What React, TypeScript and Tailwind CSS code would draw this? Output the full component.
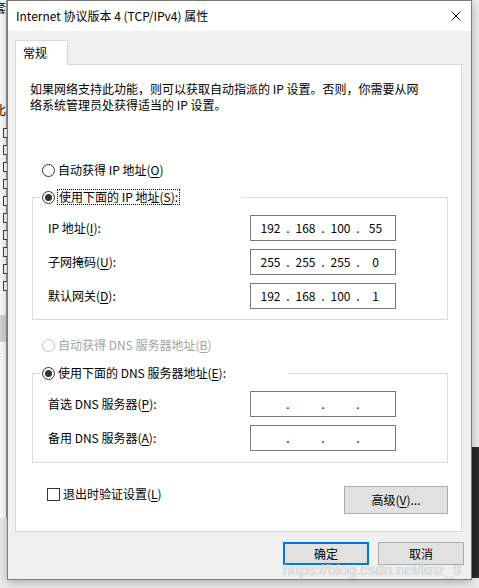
import { Fragment } from "react";
import type { ReactNode } from "react";

const Radio = ({ checked, disabled }: { checked?: boolean; disabled?: boolean }) => (
  <span
    className={`flex h-[13px] w-[13px] shrink-0 items-center justify-center rounded-full border bg-white ${
      disabled ? "border-[#c2c2c2]" : "border-[#333333]"
    }`}
  >
    {checked && <span className="h-[7px] w-[7px] rounded-full bg-[#333333]" />}
  </span>
);

const Key = ({ k }: { k: string }) => <u className="underline-offset-[2px]">{k}</u>;

const IpBox = ({ parts }: { parts: string[] }) => (
  <div className="grid h-[26px] w-[146px] grid-cols-[29px_6px_29px_6px_29px_6px_29px] items-center border border-[#7a7a7a] bg-white pl-[5px] leading-none">
    {parts.map((p, i) => (
      <Fragment key={i}>
        {i > 0 && <span className="text-center">.</span>}
        <span className="text-center">{p}</span>
      </Fragment>
    ))}
  </div>
);

const Field = ({ label, parts }: { label: ReactNode; parts: string[] }) => (
  <div className="ml-[8px] flex items-center">
    <span className="w-[202px]">{label}</span>
    <IpBox parts={parts} />
  </div>
);

export default function App() {
  return (
    <div className="relative h-[588px] w-[479px] overflow-hidden bg-[#ededed] font-['Noto_Sans_CJK_SC',sans-serif] text-[12px] text-black">
      {/* window behind, left edge */}
      <div className="absolute left-0 top-0 flex h-[518px] w-[7px] flex-col border-r border-[#9a9a9a] bg-white">
        <span className="-ml-[6px] leading-[16px]">套</span>
        <span className="-ml-[6px] mt-[86px] leading-[16px]">比</span>
        <div className="mt-[10px] flex flex-col gap-[7px]">
          {Array.from({ length: 10 }).map((_, i) => (
            <span key={i} className="ml-[3px] h-[10px] w-[4px] border border-r-0 border-[#444444] bg-white" />
          ))}
        </div>
        <div className="mt-[24px] h-[27px] bg-[#d6d6d6]" />
        <span className="-ml-[6px] mt-[6px] leading-[16px]">扌</span>
      </div>
      {/* window behind, right edge */}
      <div className="absolute right-0 top-0 h-[447px] w-[7px] bg-[#efefef]" />
      <div className="absolute right-0 top-[447px] h-[131px] w-[7px] bg-[#2b2b2b]" />

      {/* dialog */}
      <div className="absolute left-[7px] top-0 flex h-[580px] w-[465px] flex-col border border-[#7a7a7a] bg-[#f0f0f0] shadow-[0_2px_10px_rgba(0,0,0,0.3)]">
        <div className="flex h-[30px] shrink-0 items-center justify-between bg-white pl-[8px] pr-[10px]">
          <span>Internet 协议版本 4 (TCP/IPv4) 属性</span>
          <svg width="10" height="10" viewBox="0 0 10 10" className="shrink-0">
            <path d="M0.5 0.5 L9.5 9.5 M9.5 0.5 L0.5 9.5" stroke="#111" strokeWidth="1" fill="none" />
          </svg>
        </div>

        <div className="relative z-10 -mb-px ml-[7px] mt-[9px] flex h-[25px] w-[53px] items-center border border-b-0 border-[#d9d9d9] bg-white pl-[7px]">
          常规
        </div>

        <div className="ml-[7px] flex h-[468px] w-[447px] shrink-0 flex-col border border-[#d9d9d9] bg-white">
          <p className="ml-[14px] mt-[16px] leading-[16px]">
            如果网络支持此功能，则可以获取自动指派的 IP 设置。否则，你需要从网
            <br />
            络系统管理员处获得适当的 IP 设置。
          </p>

          <div className="ml-[26px] mt-[49px] flex h-[16px] items-center gap-[3px]">
            <Radio />
            <span>
              自动获得 IP 地址(<Key k="O" />)
            </span>
          </div>

          <fieldset className="ml-[16px] mt-[11px] w-[416px] border border-[#dcdcdc] px-[7px] pb-[10px]">
            <legend className="w-[202px] bg-white p-0">
              <div className="flex h-[16px] items-center gap-[2px] pl-[2px]">
                <Radio checked />
                <span className="flex h-[16px] items-center border border-dotted border-black px-[1px]">
                  使用下面的 IP 地址(<Key k="S" />):
                </span>
              </div>
            </legend>
            <div className="mt-[10px] flex flex-col gap-[8px]">
              <Field
                label={
                  <>
                    IP 地址(<Key k="I" />):
                  </>
                }
                parts={["192", "168", "100", "55"]}
              />
              <Field
                label={
                  <>
                    子网掩码(<Key k="U" />):
                  </>
                }
                parts={["255", "255", "255", "0"]}
              />
              <Field
                label={
                  <>
                    默认网关(<Key k="D" />):
                  </>
                }
                parts={["192", "168", "100", "1"]}
              />
            </div>
          </fieldset>

          <div className="ml-[26px] mt-[17px] flex h-[16px] items-center gap-[3px] text-[#a3a3a3]">
            <Radio disabled />
            <span>
              自动获得 DNS 服务器地址(<Key k="B" />)
            </span>
          </div>

          <fieldset className="ml-[16px] mt-[12px] w-[416px] border border-[#dcdcdc] px-[7px] pb-[11px]">
            <legend className="w-[249px] bg-white p-0">
              <div className="flex h-[16px] items-center gap-[3px] pl-[2px]">
                <Radio checked />
                <span>
                  使用下面的 DNS 服务器地址(<Key k="E" />):
                </span>
              </div>
            </legend>
            <div className="mt-[10px] flex flex-col gap-[8px]">
              <Field
                label={
                  <>
                    首选 DNS 服务器(<Key k="P" />):
                  </>
                }
                parts={["", "", "", ""]}
              />
              <Field
                label={
                  <>
                    备用 DNS 服务器(<Key k="A" />):
                  </>
                }
                parts={["", "", "", ""]}
              />
            </div>
          </fieldset>

          <div className="mt-[23px] flex items-start justify-between">
            <div className="ml-[31px] flex h-[16px] items-center gap-[3px]">
              <span className="h-[13px] w-[13px] border border-[#333333] bg-white" />
              <span>
                退出时验证设置(<Key k="L" />)
              </span>
            </div>
            <button className="mr-[13px] flex h-[28px] w-[104px] items-center justify-center border border-[#adadad] bg-[#e1e1e1]">
              高级(<Key k="V" />)...
            </button>
          </div>
        </div>

        <div className="mt-[10px] flex justify-end gap-[9px] pr-[7px]">
          <button className="flex h-[23px] w-[86px] items-center justify-center border-2 border-[#0078d7] bg-[#e1e1e1]">
            确定
          </button>
          <button className="flex h-[23px] w-[86px] items-center justify-center border border-[#adadad] bg-[#e1e1e1]">
            取消
          </button>
        </div>
      </div>

      <span className="pointer-events-none absolute left-[283px] top-[559px] font-['Liberation_Sans',sans-serif] text-[15px] text-white/80 [text-shadow:0_0_1px_rgba(0,0,0,0.45)]">
        https://blog.csdn.net/kriz_9
      </span>
    </div>
  );
}
